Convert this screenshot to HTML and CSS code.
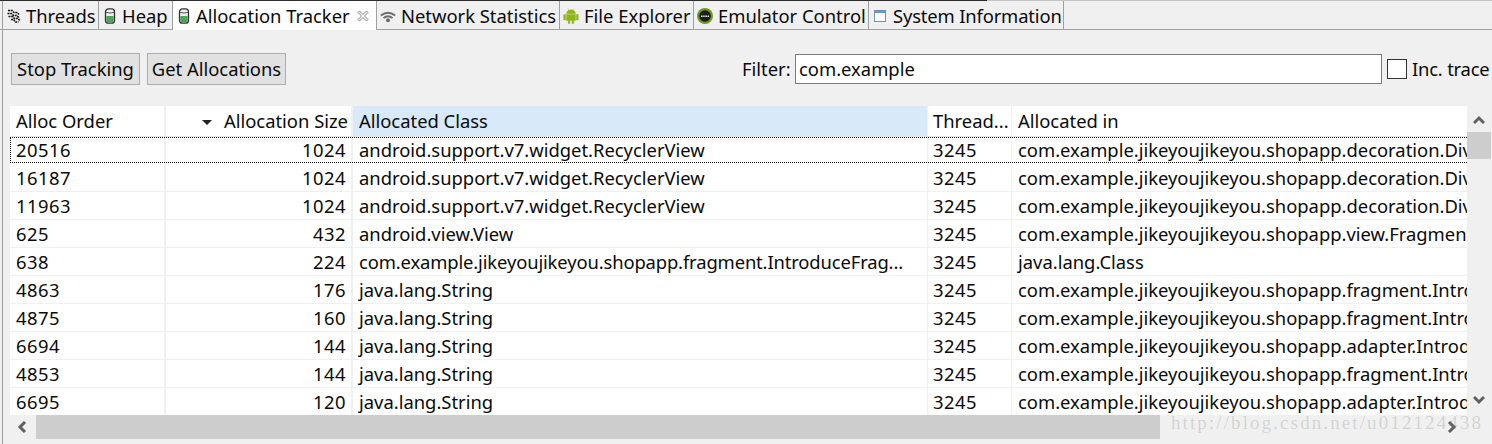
FILE: index.html
```html
<!DOCTYPE html>
<html lang="en">
<head>
<meta charset="utf-8">
<title>Allocation Tracker</title>
<link rel="stylesheet" href="styles.css">
</head>
<body>
<div class="tabs">
  <div class="tab tab-threads"><svg class="ico" viewBox="0 0 16 16"><path d="M2 2.500h4l2 2h3l2 2M1.500 5.500h4l2 2h3l3 2.500M2.500 8.500h4l2 2h3l2.500 2M5 11.500h2.500l2 2.500h3" fill="none" stroke="#111" stroke-width="1.500" stroke-dasharray="2 .7"/></svg>Threads</div>
  <div class="tab tab-heap"><svg class="ico" viewBox="0 0 16 16"><use href="#can"/></svg>Heap</div>
  <div class="tab tab-alloc active"><svg class="ico" viewBox="0 0 16 16"><use href="#can"/></svg>Allocation Tracker<svg class="close" viewBox="0 0 12 12"><path d="M1 2.500L2.500 1 6 4.500 9.500 1 11 2.500 7.500 6 11 9.500 9.500 11 6 7.500 2.500 11 1 9.500 4.500 6z" fill="#fff" stroke="#808080"/></svg></div>
  <div class="tab tab-net"><svg class="ico" viewBox="0 0 16 16"><path d="M.8 7.500q7.200-5.500 14.400 0M3.500 10q4.500-3.500 9 0" fill="none" stroke="#6e6e6e" stroke-width="2"/><circle cx="8" cy="12.300" r="2" fill="#6e6e6e"/></svg>Network Statistics</div>
  <div class="tab tab-file"><svg class="ico" viewBox="0 0 16 16"><path d="M3.500 5.700a4.500 4 0 0 1 9 0zM3.500 6.500h9v6h-1.700V15.500H9v-3H7v3H5.200v-3H3.500zM.7 6.500h2v5.500h-2zM13.300 6.500h2v5.500h-2zM5 .7l1.200 1.800M11 .7L9.800 2.500" fill="#8fb516" stroke="#8fb516" stroke-width=".4"/></svg>File Explorer</div>
  <div class="tab tab-emu"><svg class="ico" viewBox="0 0 16 16"><circle cx="8" cy="8" r="8" fill="#6b9a22"/><circle cx="8" cy="8" r="5.800" fill="#1d1d1d"/><path d="M4 8.300h8" stroke="#eee" stroke-width="1.400" stroke-dasharray="1.500 .7"/></svg>Emulator Control</div>
  <div class="tab tab-sys"><svg class="ico" viewBox="0 0 16 16"><rect x="2.500" y="2.500" width="11" height="11" fill="#fff" stroke="#6f8fb5"/><rect x="3" y="3" width="10" height="2" fill="#5e9ad6"/></svg>System Information</div>
  <div class="tab-rest"></div>
</div>
<svg class="defs" width="0" height="0"><defs><g id="can"><rect x="3.500" y=".8" width="9" height="14.400" rx="3" fill="#eee" stroke="#333" stroke-width="1.300"/><path d="M4.300 8h7.400v4.500q0 2-2 2H6.300q-2 0-2-2z" fill="#4fa35a"/><path d="M4 4.300q4 1.500 8 0" fill="none" stroke="#555"/></g></defs></svg>
<main class="panel">
  <div class="toolbar">
    <button class="btn btn-stop">Stop Tracking</button>
    <button class="btn btn-get">Get Allocations</button>
    <label class="filter-label">Filter:</label>
    <div class="filter-input">com.example</div>
    <span class="checkbox"></span>
    <span class="inc">Inc. trace</span>
  </div>
  <div class="table-wrap">
    <div class="table-col">
      <div class="table">
        <div class="row head">
          <div class="c c1">Alloc Order</div>
          <div class="c c2 num"><span class="sort"></span>Allocation Size</div>
          <div class="c c3 sorted">Allocated Class</div>
          <div class="c c4">Thread...</div>
          <div class="c c5">Allocated in</div>
        </div>
        <div class="row selected"><div class="c c1 digits">20516</div><div class="c c2 num digits">1024</div><div class="c c3">android.support.v7.widget.RecyclerView</div><div class="c c4 digits">3245</div><div class="c c5">com.example.jikeyoujikeyou.shopapp.decoration.DividerItemDecoration</div></div>
        <div class="row"><div class="c c1 digits">16187</div><div class="c c2 num digits">1024</div><div class="c c3">android.support.v7.widget.RecyclerView</div><div class="c c4 digits">3245</div><div class="c c5">com.example.jikeyoujikeyou.shopapp.decoration.DividerItemDecoration</div></div>
        <div class="row"><div class="c c1 digits">11963</div><div class="c c2 num digits">1024</div><div class="c c3">android.support.v7.widget.RecyclerView</div><div class="c c4 digits">3245</div><div class="c c5">com.example.jikeyoujikeyou.shopapp.decoration.DividerItemDecoration</div></div>
        <div class="row"><div class="c c1 digits">625</div><div class="c c2 num digits">432</div><div class="c c3">android.view.View</div><div class="c c4 digits">3245</div><div class="c c5">com.example.jikeyoujikeyou.shopapp.view.FragmentTabHost</div></div>
        <div class="row"><div class="c c1 digits">638</div><div class="c c2 num digits">224</div><div class="c c3 tight">com.example.jikeyoujikeyou.shopapp.fragment.IntroduceFrag...</div><div class="c c4 digits">3245</div><div class="c c5">java.lang.Class</div></div>
        <div class="row"><div class="c c1 digits">4863</div><div class="c c2 num digits">176</div><div class="c c3">java.lang.String</div><div class="c c4 digits">3245</div><div class="c c5">com.example.jikeyoujikeyou.shopapp.fragment.IntroduceFragment</div></div>
        <div class="row"><div class="c c1 digits">4875</div><div class="c c2 num digits">160</div><div class="c c3">java.lang.String</div><div class="c c4 digits">3245</div><div class="c c5">com.example.jikeyoujikeyou.shopapp.fragment.IntroduceFragment</div></div>
        <div class="row"><div class="c c1 digits">6694</div><div class="c c2 num digits">144</div><div class="c c3">java.lang.String</div><div class="c c4 digits">3245</div><div class="c c5">com.example.jikeyoujikeyou.shopapp.adapter.IntroduceAdapter</div></div>
        <div class="row"><div class="c c1 digits">4853</div><div class="c c2 num digits">144</div><div class="c c3">java.lang.String</div><div class="c c4 digits">3245</div><div class="c c5">com.example.jikeyoujikeyou.shopapp.fragment.IntroduceFragment</div></div>
        <div class="row last"><div class="c c1 digits">6695</div><div class="c c2 num digits">120</div><div class="c c3">java.lang.String</div><div class="c c4 digits">3245</div><div class="c c5">com.example.jikeyoujikeyou.shopapp.adapter.IntroduceAdapter</div></div>
      </div>
      <div class="hbar">
        <svg class="arrow" viewBox="0 0 12 12"><path d="M9 1L4 6l5 5" fill="none" stroke="#606060" stroke-width="3"/></svg>
        <div class="hthumb"></div>
        <svg class="arrow arrow-right" viewBox="0 0 12 12"><path d="M3 1l5 5-5 5" fill="none" stroke="#606060" stroke-width="3"/></svg>
      </div>
    </div>
    <div class="vbar">
      <svg class="arrow arrow-up" viewBox="0 0 12 12"><path d="M1 9l5-5 5 5" fill="none" stroke="#606060" stroke-width="3"/></svg>
      <div class="vthumb"></div>
      <svg class="arrow arrow-down" viewBox="0 0 12 12"><path d="M1 3l5 5 5-5" fill="none" stroke="#606060" stroke-width="3"/></svg>
    </div>
  </div>
  <div class="watermark">http://blog.csdn.net/u012124438</div>
</main>
</body>
</html>
```
FILE: styles.css
```css
* { box-sizing: border-box; }
html, body { margin: 0; padding: 0; }
body {
  width: 1492px;
  height: 444px;
  overflow: hidden;
  position: relative;
  background: #f0f0f0;
  color: #0a0a0a;
  font-family: "Noto Sans", "Open Sans", sans-serif;
  font-size: 18.4px;
  line-height: 24px;
}
.defs { position: absolute; }
.tabs {
  display: flex;
  height: 30px;
  padding: 1px 0 0 2px;
  background: linear-gradient(to right, #2e2e2e 987px, #c4c4c4 987px) top left / 100% 1px no-repeat #f0f0f0;
  border-bottom: 1px solid #a0a0a0;
  white-space: nowrap;
}
.tab {
  display: flex;
  align-items: center;
  height: 28px;
  padding: 1px 0 0 3px;
  border-right: 1px solid #a0a0a0;
}
.tab-threads { width: 97px; border-left: 1px solid #a0a0a0; }
.tab-heap { width: 74px; }
.tab-alloc { width: 204px; }
.tab-net { width: 183px; }
.tab-file { width: 134px; }
.tab-emu { width: 175px; }
.tab-sys { width: 195px; letter-spacing: -.15px; }
.tab.active {
  background: #fff;
  height: 29px;
}
.ico { width: 16px; height: 16px; margin-right: 4px; flex: none; }
.tab-net .ico, .tab-file .ico, .tab-emu .ico, .tab-sys .ico { margin-right: 5px; }
.close { width: 12px; height: 12px; margin-left: 7px; }
.tab-rest { flex: 1; }
.panel {
  height: 414px;
  margin-left: 2px;
  border-left: 1px solid #a0a0a0;
  padding: 0 0 0 7px;
}
.toolbar {
  display: flex;
  align-items: center;
  height: 76px;
  padding-top: 2px;
}
.btn {
  font: inherit;
  color: inherit;
  height: 32px;
  background: #e1e1e1;
  border: 1px solid #adadad;
  padding: 0 2px;
  margin: 0 0 0 1px;
  white-space: nowrap;
}
.btn-stop { width: 129px; }
.btn-get { width: 139px; margin-left: 7px; }
.filter-label { margin-left: 456px; width: 53px; }
.filter-input {
  width: 587px;
  height: 30px;
  background: #fff;
  border: 1px solid #7a7a7a;
  padding: 2px 3px;
}
.checkbox {
  width: 20px;
  height: 20px;
  margin-left: 5px;
  background: #fff;
  border: 1px solid #333;
}
.inc { margin-left: 5px; white-space: nowrap; letter-spacing: -.2px; }
.table-wrap { display: flex; height: 333px; }
.table-col { width: 1457px; }
.table { height: 309px; background: #fff; overflow: hidden; }
.row {
  display: flex;
  height: 28px;
  border-bottom: 1px solid #eff0f2;
}
.row.head { height: 31px; border-bottom: 1px solid #e4e4e4; }
.row.selected { height: 26px; margin-bottom: 1px; border-top: 1px dotted #111; border-bottom: 1px dotted #111; border-left: 1px dotted #111; }
.selected .c { padding-top: 0; }
.c {
  padding: 2px 6px 0;
  border-right: 2px solid #eff0f2;
  white-space: nowrap;
  overflow: hidden;
}
.digits { letter-spacing: .5px; }
.tight { letter-spacing: -.13px; }
.head .c { padding-top: 3px; }
.c1 { width: 156px; }
.c2 { width: 187px; }
.c3 { width: 575px; border-right-width: 1px; }
.c4 { width: 84px; padding-left: 5px; border-right-width: 1px; }
.c5 { width: 455px; border-right: 0; }
.selected .c1 { width: 155px; padding-left: 5px; }
.num { text-align: right; padding-right: 5px; }
.head .num { padding-right: 3px; }
.head .sorted { background: #d8e9f9; }
.sort {
  display: inline-block;
  width: 0;
  height: 0;
  margin-right: 12px;
  vertical-align: 3px;
  border-left: 5px solid transparent;
  border-right: 5px solid transparent;
  border-top: 5px solid #222;
}
.hbar { display: flex; align-items: center; height: 24px; }
.hbar .arrow { margin-left: 6px; }
.hthumb { width: 1124px; height: 24px; margin-left: 8px; background: #cdcdcd; }
.hbar .arrow-right { margin-left: 286px; }
.arrow { width: 12px; height: 12px; flex: none; }
.vbar { width: 24px; display: flex; flex-direction: column; align-items: center; height: 309px; }
.arrow-up { margin-top: 8px; }
.vthumb { width: 24px; height: 27px; margin-top: 6px; background: #cdcdcd; }
.arrow-down { margin-top: 235px; }
.watermark {
  position: absolute;
  left: 1171px;
  top: 411px;
  font-family: "Liberation Serif", serif;
  font-size: 19px;
  letter-spacing: 2.100px;
  color: rgba(120, 120, 120, 0.25);
  white-space: nowrap;
}
```
